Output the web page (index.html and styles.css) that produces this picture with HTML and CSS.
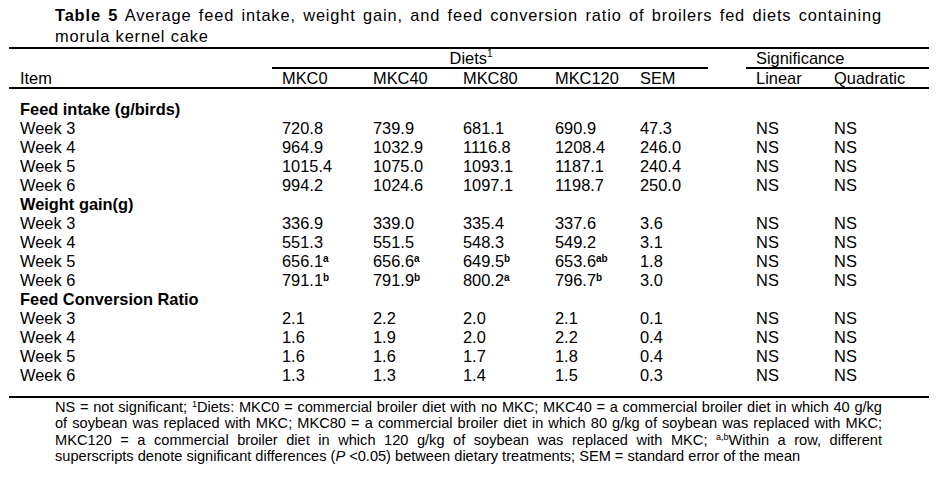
FILE: index.html
```html
<!DOCTYPE html>
<html lang="en">
<head>
<meta charset="utf-8">
<title>Table 5</title>
<link rel="stylesheet" href="styles.css">
</head>
<body>
<div class="caption">
  <span class="jline"><b>Table 5</b> Average feed intake, weight gain, and feed conversion ratio of broilers fed diets containing</span>
  <span class="line">morula kernel cake</span>
</div>
<table class="data">
  <colgroup>
    <col class="c-item"><col class="c-d0"><col class="c-d40"><col class="c-d80"><col class="c-d120"><col class="c-sem"><col class="c-gap"><col class="c-lin"><col class="c-quad">
  </colgroup>
  <thead>
    <tr class="h1">
      <th></th>
      <th colspan="5" class="group diets">Diets<sup class="hs">1</sup></th>
      <th></th>
      <th colspan="2" class="group">Significance</th>
    </tr>
    <tr class="h2">
      <th class="item">Item</th>
      <th>MKC0</th><th>MKC40</th><th>MKC80</th><th>MKC120</th><th>SEM</th>
      <th></th>
      <th>Linear</th><th class="q">Quadratic</th>
    </tr>
  </thead>
  <tbody>
    <tr class="gap"><td colspan="9"></td></tr>
    <tr class="sec"><td colspan="9">Feed intake (g/birds)</td></tr>
    <tr><td class="item">Week 3</td><td>720.8</td><td>739.9</td><td>681.1</td><td>690.9</td><td>47.3</td><td></td><td>NS</td><td class="q">NS</td></tr>
    <tr><td class="item">Week 4</td><td>964.9</td><td>1032.9</td><td>1116.8</td><td>1208.4</td><td>246.0</td><td></td><td>NS</td><td class="q">NS</td></tr>
    <tr><td class="item">Week 5</td><td>1015.4</td><td>1075.0</td><td>1093.1</td><td>1187.1</td><td>240.4</td><td></td><td>NS</td><td class="q">NS</td></tr>
    <tr><td class="item">Week 6</td><td>994.2</td><td>1024.6</td><td>1097.1</td><td>1198.7</td><td>250.0</td><td></td><td>NS</td><td class="q">NS</td></tr>
    <tr class="sec"><td colspan="9">Weight gain(g)</td></tr>
    <tr><td class="item">Week 3</td><td>336.9</td><td>339.0</td><td>335.4</td><td>337.6</td><td>3.6</td><td></td><td>NS</td><td class="q">NS</td></tr>
    <tr><td class="item">Week 4</td><td>551.3</td><td>551.5</td><td>548.3</td><td>549.2</td><td>3.1</td><td></td><td>NS</td><td class="q">NS</td></tr>
    <tr><td class="item">Week 5</td><td>656.1<sup class="s">a</sup></td><td>656.6<sup class="s">a</sup></td><td>649.5<sup class="s">b</sup></td><td>653.6<sup class="s">ab</sup></td><td>1.8</td><td></td><td>NS</td><td class="q">NS</td></tr>
    <tr><td class="item">Week 6</td><td>791.1<sup class="s">b</sup></td><td>791.9<sup class="s">b</sup></td><td>800.2<sup class="s">a</sup></td><td>796.7<sup class="s">b</sup></td><td>3.0</td><td></td><td>NS</td><td class="q">NS</td></tr>
    <tr class="sec"><td colspan="9">Feed Conversion Ratio</td></tr>
    <tr><td class="item">Week 3</td><td>2.1</td><td>2.2</td><td>2.0</td><td>2.1</td><td>0.1</td><td></td><td>NS</td><td class="q">NS</td></tr>
    <tr><td class="item">Week 4</td><td>1.6</td><td>1.9</td><td>2.0</td><td>2.2</td><td>0.4</td><td></td><td>NS</td><td class="q">NS</td></tr>
    <tr><td class="item">Week 5</td><td>1.6</td><td>1.6</td><td>1.7</td><td>1.8</td><td>0.4</td><td></td><td>NS</td><td class="q">NS</td></tr>
    <tr><td class="item">Week 6</td><td>1.3</td><td>1.3</td><td>1.4</td><td>1.5</td><td>0.3</td><td></td><td>NS</td><td class="q">NS</td></tr>
    <tr class="gap end"><td colspan="9"></td></tr>
  </tbody>
</table>
<div class="notes">
  <span class="jline">NS = not significant; <sup class="fs">1</sup>Diets: MKC0 = commercial broiler diet with no MKC; MKC40 = a commercial broiler diet in which 40 g/kg</span>
  <span class="jline">of soybean was replaced with MKC; MKC80 = a commercial broiler diet in which 80 g/kg of soybean was replaced with MKC;</span>
  <span class="jline">MKC120 = a commercial broiler diet in which 120 g/kg of soybean was replaced with MKC; <sup class="fs">a,b</sup>Within a row, different</span>
  <span class="line">superscripts denote significant differences (<i>P</i> &lt;0.05) between dietary treatments; SEM = standard error of the mean</span>
</div>
</body>
</html>
```

FILE: styles.css
```css
html, body {
  margin: 0;
  padding: 0;
  background: #ffffff;
}

body {
  font-family: "Liberation Sans", Arial, sans-serif;
  color: #000000;
  width: 940px;
}

.caption {
  margin: 5px 0 0 55px;
  width: 827px;
  font-size: 16.4px;
  line-height: 21px;
  letter-spacing: 0.85px;
}

.jline {
  display: block;
  text-align: justify;
  text-align-last: justify;
  white-space: nowrap;
}

.line {
  display: block;
  white-space: nowrap;
}

.data {
  margin-left: 9px;
  width: 920px;
  table-layout: fixed;
  border-collapse: separate;
  border-spacing: 0;
  font-size: 16.4px;
}

.c-item { width: 263px; }
.c-d0 { width: 91px; }
.c-d40 { width: 90px; }
.c-d80 { width: 92px; }
.c-d120 { width: 85px; }
.c-sem { width: 78px; }
.c-gap { width: 38px; }
.c-lin { width: 79px; }
.c-quad { width: 104px; }

.data th,
.data td {
  padding: 0 0 0 10px;
  text-align: left;
  font-weight: normal;
  white-space: nowrap;
  vertical-align: top;
}

.data .item { padding-left: 11px; }
.data .q { padding-left: 9px; }

.h1 th {
  border-top: 2px solid #000;
  line-height: 18px;
}

.h1 .group {
  border-bottom: 2px solid #000;
}

.h1 .diets {
  text-align: center;
  padding-right: 48px;
}

.h2 th {
  line-height: 18px;
  border-bottom: 2px solid #000;
}

.data tbody td {
  line-height: 19px;
  height: 19px;
}

.data .gap td {
  height: 11px;
  line-height: 0;
  padding: 0;
}

.data .gap.end td {
  border-bottom: 2px solid #000;
}

.data .sec td {
  font-weight: bold;
  padding-left: 11px;
}

.hs {
  font-size: 10px;
  line-height: 0;
  vertical-align: 7px;
}

.s {
  font-size: 10px;
  font-weight: bold;
  line-height: 0;
  vertical-align: 5px;
}

.notes {
  margin: 1px 0 0 55px;
  width: 827px;
  font-size: 14.6px;
  line-height: 16.4px;
}

.fs {
  font-size: 9px;
  line-height: 0;
  vertical-align: 5px;
}
```
